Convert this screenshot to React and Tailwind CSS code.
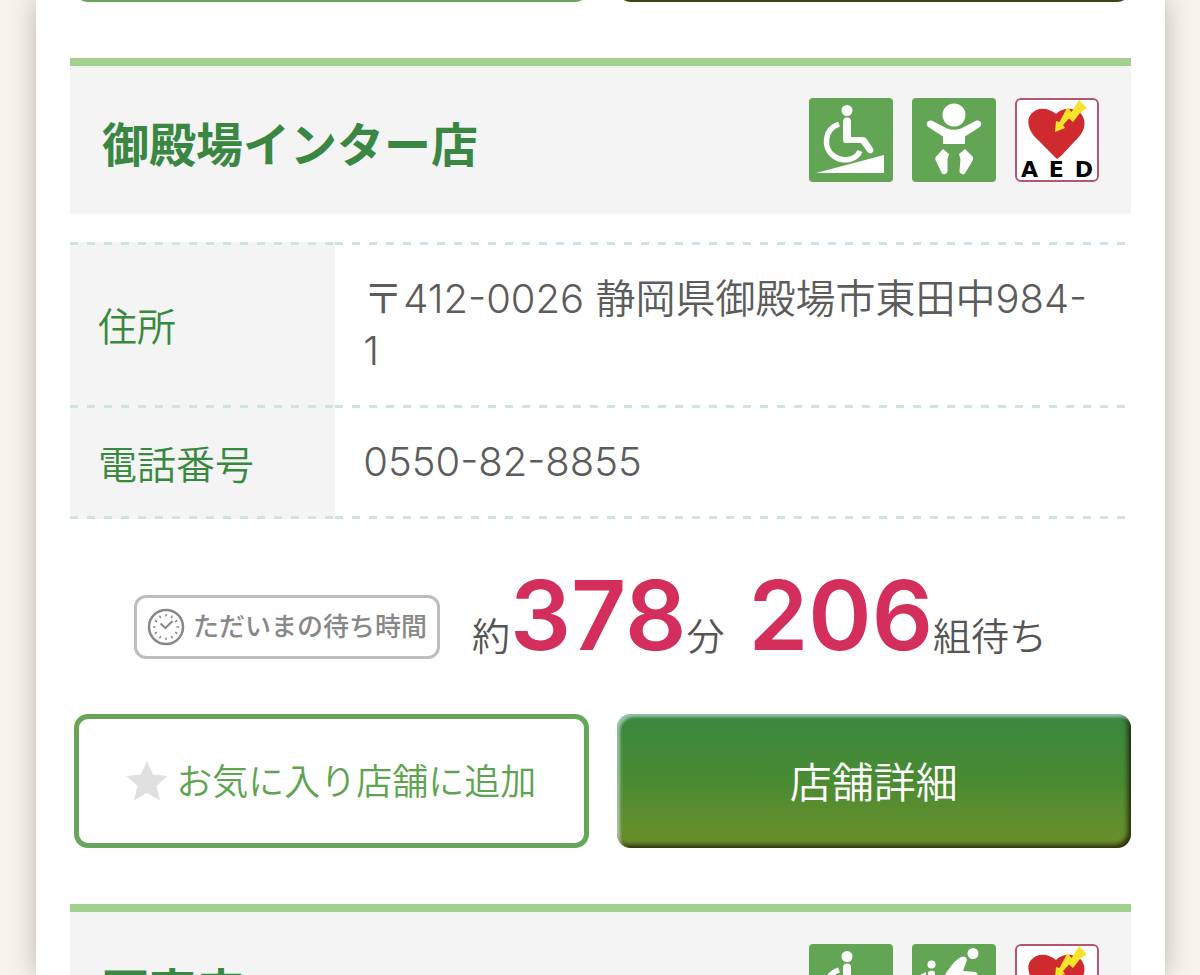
import clsx from 'clsx'

const stores = [
  {
    id: 'gotemba',
    name: '御殿場インター店',
    facilities: ['wheelchair', 'baby', 'aed'],
    address: '〒412-0026 静岡県御殿場市東田中984-1',
    phone: '0550-82-8855',
    minutes: 378,
    groups: 206,
  },
  {
    id: 'next',
    name: '百高店',
    facilities: ['wheelchair', 'assist', 'aed'],
  },
]

function WheelchairIcon() {
  return (
    <svg viewBox="0 0 84 84" className="size-[84px] shrink-0" role="img" aria-label="車いす対応">
      <rect width="84" height="84" rx="4" fill="#62a655" />
      <circle cx="38" cy="12.5" r="5.5" fill="#fff" />
      <path d="M34 23.5a4 4 0 0 1 8 0V39h12c2 0 3 1 4 2.500l6 9c2 4-3 6.500-5.500 3.500L52 45H37c-2 0-3-1-3-3z" fill="#fff" />
      <path d="M30 26C15 31 14 50 24 57.500S47 62 51 53" fill="none" stroke="#fff" strokeWidth="5.500" />
      <path d="M7 75L75 57v18z" fill="#fff" />
    </svg>
  )
}

function BabyIcon() {
  return (
    <svg viewBox="0 0 84 84" className="size-[84px] shrink-0" role="img" aria-label="おむつ交換台">
      <rect width="84" height="84" rx="4" fill="#62a655" />
      <circle cx="42" cy="17" r="11.500" fill="#fff" />
      <path d="M20.500 23L35 30.500Q42 33 49 30.500L63.500 23c5-2 8 4 3.500 6.500L53 38.500V46H31v-7.500L17 29.500c-4.500-2.500-1.500-8.500 3.500-6.500z" fill="#fff" />
      <path d="M31 51l6 5-1.500 5v12.500c-1 3.500-5 3.500-6 1L23.500 62c-.5-2 0-3 1.500-4.500z" fill="#fff" />
      <path d="M53 51l-6 5 1.500 5-1 12.500c1 3.500 5 3.500 6 1L61 62c.5-2 0-3-1.500-4.500z" fill="#fff" />
    </svg>
  )
}

function AssistIcon() {
  return (
    <svg viewBox="0 0 84 84" className="size-[84px] shrink-0" role="img" aria-label="お子さま用いす">
      <rect width="84" height="84" rx="4" fill="#62a655" />
      <circle cx="61" cy="9.500" r="5.500" fill="#fff" />
      <circle cx="19.500" cy="20.500" r="4" fill="#fff" />
      <path d="M49 13q5-2 6 3l-4 11 13 1q3 3 0 4l-17 1-4 5 4 37h-9l-6-38q0-7 5-12 5-8 12-12z" fill="#fff" />
      <path d="M16 28q4-3 7 0v11h10v6H22v28h-6zM8 31l6-3v45H8z" fill="#fff" />
    </svg>
  )
}

function AedIcon() {
  return (
    <div className="flex size-[84px] shrink-0 flex-col rounded-md border-2 border-[#b5566f] bg-white" role="img" aria-label="AED">
      <svg viewBox="0 0 80 60" className="w-full shrink-0" aria-hidden="true">
        <path d="M40 59C37 56 30 49 20 39 11 31 9 20 14 14 21 6 32 8 39 14 47 6 60 8 65 15c5 8 2 17-5 24-9 9-15 17-20 20z" fill="#cf2a30" />
        <path d="M62 0l8 8-7 5-7 9-4-3.500-6 6.500 2 3-10 4 1-11 3.500 1 8-15 4 5z" fill="#f8e32c" />
      </svg>
      <div className="flex justify-between px-1 font-['DejaVu_Sans'] text-[22px]/5 font-bold text-black" aria-hidden="true">
        <span>A</span>
        <span>E</span>
        <span>D</span>
      </div>
    </div>
  )
}

const facilityIcons = {
  wheelchair: WheelchairIcon,
  baby: BabyIcon,
  assist: AssistIcon,
  aed: AedIcon,
}

function ClockIcon() {
  const ticks = Array.from({ length: 12 }, (_, i) => i * 30)
  return (
    <svg viewBox="0 0 38 38" className="size-[38px] shrink-0" fill="none" stroke="#888" aria-hidden="true">
      <circle cx="19" cy="19" r="17" strokeWidth="2.500" />
      {ticks.map((deg) => (
        <path key={deg} d="M19 6v2.500" strokeWidth="1.500" transform={`rotate(${deg} 19 19)`} />
      ))}
      <path d="M13.500 15.500l5 4.500 7-7" strokeWidth="2" />
    </svg>
  )
}

function StarIcon() {
  return (
    <svg viewBox="0 0 42 42" className="size-[42px] shrink-0" fill="#e0e0e0" aria-hidden="true">
      <path d="M21 1l6 13.500 14.500 1.500-11 10 3.500 14.500L21 33 8 40.500 11.500 26 .5 16 15 14.500z" />
    </svg>
  )
}

function StoreActions() {
  return (
    <div className="grid shrink-0 grid-cols-2 gap-7 pl-1">
      <button
        type="button"
        className="flex h-[134px] items-center justify-center gap-2 rounded-[14px] border-5 border-[#67a65a] bg-white text-4xl font-[350] text-[#5da350]"
      >
        <StarIcon />
        <span className="pb-1">お気に入り店舗に追加</span>
      </button>
      <a
        href="#detail"
        className="flex h-[134px] items-center justify-center rounded-[14px] bg-linear-to-b from-[#38883f] via-[#4a8b32] to-[#6c902a] pb-1 text-[42px] font-[350] text-white shadow-[inset_3px_3px_3px_rgba(220,235,245,0.6),inset_-3px_-3px_5px_rgba(20,10,0,0.75)]"
      >
        店舗詳細
      </a>
    </div>
  )
}

function StoreHeader({ name, facilities }) {
  return (
    <header className="flex h-[156px] shrink-0 items-center justify-between border-t-8 border-[#a3d08f] bg-[#f4f4f4] px-8">
      <h2 className="pt-1 text-[47px] font-bold text-[#3a8743]">{name}</h2>
      <div className="flex gap-[19px]">
        {facilities.map((key) => {
          const Icon = facilityIcons[key]
          return <Icon key={key} />
        })}
      </div>
    </header>
  )
}

function DashedLine() {
  return (
    <div className="h-[3px] w-full bg-[repeating-linear-gradient(90deg,#d0e3dc_0_8px,transparent_8px_17px)]" />
  )
}

function InfoRow({ label, children, last }) {
  return (
    <tr>
      <th scope="row" className="h-px w-1/4 bg-[#f4f4f4] p-0 text-left font-[350] text-[#38883f]">
        <div className="flex h-full flex-col justify-between">
          <DashedLine />
          <span className="px-7">{label}</span>
          <div className={clsx(!last && 'invisible')}>
            <DashedLine />
          </div>
        </div>
      </th>
      <td className="h-px p-0 align-top">
        <DashedLine />
        <div className="py-7 pr-10 pl-7 font-['Inter','Noto_Sans_CJK_JP',sans-serif] text-[40px]/[52px] font-[350] break-all text-[#5c5c5c]">
          {children}
        </div>
        {last && <DashedLine />}
      </td>
    </tr>
  )
}

function WaitTime({ minutes, groups }) {
  return (
    <div className="flex h-[195px] items-center gap-8 pl-16">
      <div className="mt-5 flex h-16 shrink-0 items-center gap-2 rounded-xl border-3 border-[#bdbdbd] px-2.5 text-[26px] font-medium whitespace-nowrap text-[#888]">
        <ClockIcon />
        <span className="pb-1">ただいまの待ち時間</span>
      </div>
      <p className="flex items-baseline pb-1 text-[38px] font-[350] whitespace-nowrap text-[#555]">
        約
        <strong className="font-['Inter'] text-8xl/[96px] font-semibold text-[#d42e5d]">{minutes}</strong>
        分
        <strong className="ml-6 font-['Inter'] text-8xl/[96px] font-semibold text-[#d42e5d]">{groups}</strong>
        組待ち
      </p>
    </div>
  )
}

function StoreCard({ store }) {
  return (
    <section className="mt-14 shrink-0">
      <StoreHeader name={store.name} facilities={store.facilities} />
      {store.phone && (
        <>
          <table className="mt-7 w-full border-separate border-spacing-0 text-[39px]/[52px]">
            <tbody>
              <InfoRow label="住所">{store.address}</InfoRow>
              <InfoRow label="電話番号" last>
                {store.phone}
              </InfoRow>
            </tbody>
          </table>
          <WaitTime minutes={store.minutes} groups={store.groups} />
          <StoreActions />
        </>
      )}
    </section>
  )
}

// bottom edge of the store card scrolled off above
function ScrolledCardEdge() {
  return (
    <div className="flex h-0.5 shrink-0 flex-col justify-end overflow-hidden" aria-hidden="true">
      <div className="grid shrink-0 grid-cols-2 gap-7 pl-1">
        <div className="h-8 rounded-[14px] border-5 border-[#67a65a]" />
        <div className="h-8 rounded-[14px] bg-[#3c4410]" />
      </div>
    </div>
  )
}

function App() {
  return (
    <div className="h-screen overflow-hidden bg-[#f7f2ec] font-['Noto_Sans_CJK_JP',sans-serif]" lang="ja">
      <main className="mr-[35px] ml-9 flex h-full flex-col bg-white px-[34px] shadow-[0_0_24px_rgba(0,0,0,0.25)]">
        <ScrolledCardEdge />
        {stores.map((store) => (
          <StoreCard key={store.id} store={store} />
        ))}
      </main>
    </div>
  )
}

export default App
